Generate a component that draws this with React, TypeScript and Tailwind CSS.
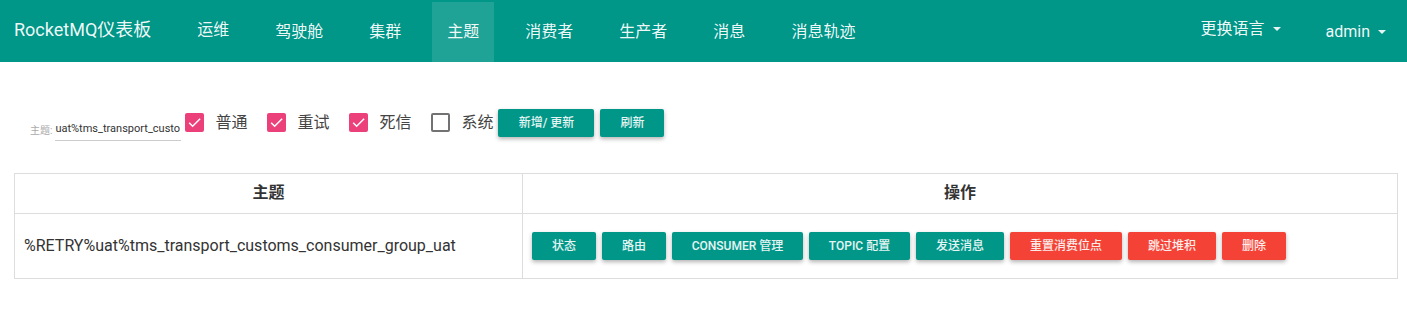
const font = "font-['Roboto','Noto_Sans_CJK_SC',sans-serif]";

const navItems = ["运维", "驾驶舱", "集群", "主题", "消费者", "生产者", "消息", "消息轨迹"];

type Action = { label: string; danger?: boolean; width: string };

const actions: Action[] = [
  { label: "状态", width: "w-[64px]" },
  { label: "路由", width: "w-[64px]" },
  { label: "CONSUMER 管理", width: "w-[131px]" },
  { label: "TOPIC 配置", width: "w-[101px]" },
  { label: "发送消息", width: "w-[88px]" },
  { label: "重置消费位点", danger: true, width: "w-[112px]" },
  { label: "跳过堆积", danger: true, width: "w-[88px]" },
  { label: "删除", danger: true, width: "w-[64px]" },
];

function Caret() {
  return (
    <span className="ml-[8px] inline-block h-0 w-0 border-x-[4px] border-t-[4px] border-x-transparent border-t-white/90" />
  );
}

function Check({ label, checked }: { label: string; checked: boolean }) {
  return (
    <label className="flex items-center">
      {checked ? (
        <span className="flex h-[19px] w-[19px] items-center justify-center rounded-[2px] bg-[#ec407a]">
          <svg width="15" height="15" viewBox="0 0 24 24" fill="none">
            <path d="M3.5 12.5l5.5 5.5L21 6" stroke="white" strokeWidth="2.4" />
          </svg>
        </span>
      ) : (
        <span className="h-[19px] w-[19px] rounded-[2px] border-2 border-[#727272]" />
      )}
      <span className="ml-[11px] text-[16px] text-[#444]">{label}</span>
    </label>
  );
}

function Btn({ children, className }: { children: React.ReactNode; className: string }) {
  return (
    <button
      className={`flex h-[28px] items-center justify-center rounded-[2px] text-[12px] font-medium text-white/90 shadow-[0_2px_4px_rgba(0,0,0,0.3)] ${className}`}
    >
      {children}
    </button>
  );
}

export default function App() {
  return (
    <div className={`${font} min-h-[316px] bg-white`}>
      <nav className="flex h-[62px] items-stretch bg-[#009688] text-white/95">
        <div className="ml-[14px] mr-[23px] flex items-center pb-[3px] text-[18px]">RocketMQ仪表板</div>
        <ul className="flex items-stretch">
          {navItems.map((item) => (
            <li
              key={item}
              className={`mx-[8px] mt-[2px] flex items-center px-[15px] text-[16px] ${
                item === "主题" ? "bg-[#1fa396]" : ""
              }`}
            >
              <span className={item === "运维" ? "mb-[5px]" : ""}>{item}</span>
            </li>
          ))}
        </ul>
        <div className="ml-auto flex items-center pb-[4px] text-[16px]">
          更换语言
          <Caret />
        </div>
        <div className="ml-[45px] mr-[21px] flex items-center pt-[2px] text-[16px]">
          admin
          <Caret />
        </div>
      </nav>

      <div className="mt-[43px] flex items-center pl-[30px]">
        <div className="mr-[4px] mt-[16px] flex items-end">
          <span className="mb-[3px] mr-[3px] text-[10px] text-[#aaa]">主题:</span>
          <div className="w-[126px] overflow-hidden whitespace-nowrap border-b border-[#ccc] pb-[2px] text-[11px] text-[#333]">
            uat%tms_transport_custo
          </div>
        </div>
        <div className="flex items-center gap-[20px]">
          <Check label="普通" checked />
          <Check label="重试" checked />
          <Check label="死信" checked />
          <Check label="系统" checked={false} />
        </div>
        <Btn className="ml-[5px] w-[96px] bg-[#009688]">新增/ 更新</Btn>
        <Btn className="ml-[6px] w-[64px] bg-[#009688]">刷新</Btn>
      </div>

      <div className="ml-[14px] mt-[32px] grid w-[1384px] grid-cols-[508px_1fr] border border-[#ddd] text-[#333]">
        <div className="flex h-[40px] items-center justify-center border-b border-r border-[#ddd] text-[16px] font-bold">
          主题
        </div>
        <div className="flex h-[40px] items-center justify-center border-b border-[#ddd] text-[16px] font-bold">
          操作
        </div>
        <div className="flex h-[64px] items-center border-r border-[#ddd] pl-[9px] text-[16px]">
          %RETRY%uat%tms_transport_customs_consumer_group_uat
        </div>
        <div className="flex h-[64px] items-center gap-[6px] pl-[9px]">
          {actions.map((a) => (
            <Btn key={a.label} className={`${a.width} ${a.danger ? "bg-[#f44336]" : "bg-[#009688]"}`}>
              {a.label}
            </Btn>
          ))}
        </div>
      </div>
    </div>
  );
}
